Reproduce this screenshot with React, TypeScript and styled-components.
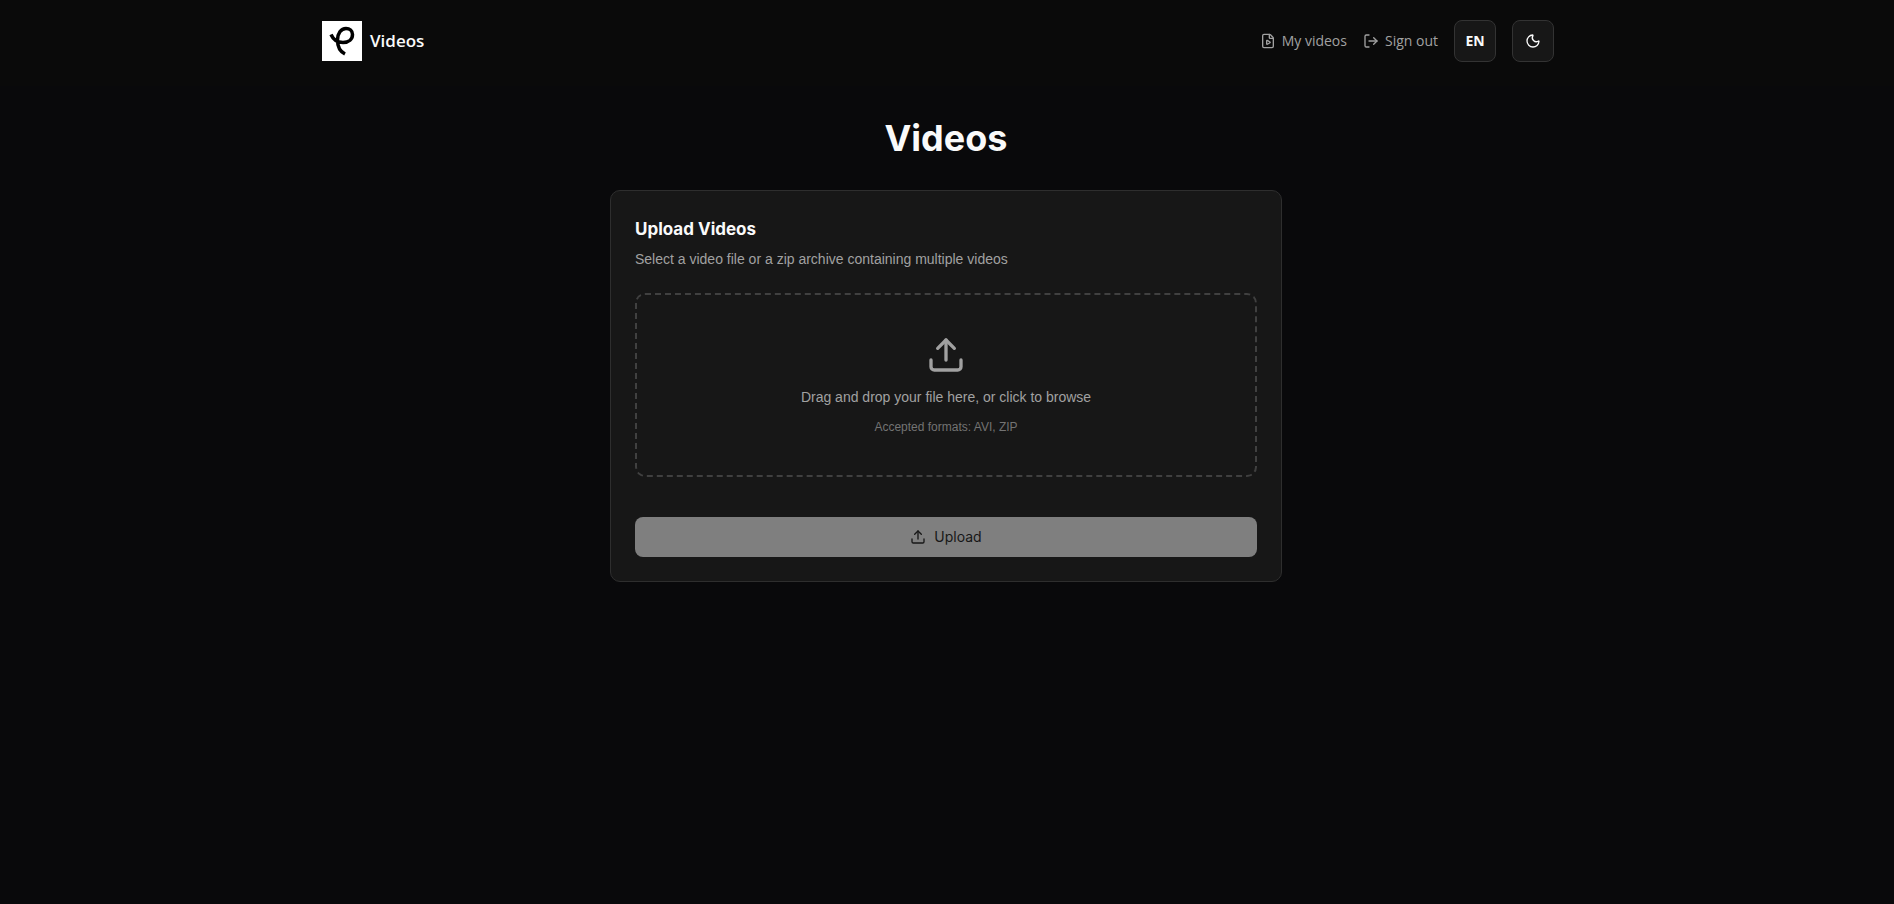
import React from "react";
import styled, { createGlobalStyle } from "styled-components";
import { FilePlay, LogOut, Moon, Upload } from "lucide-react";

const bodyFont = `"Liberation Sans", Arial, sans-serif`;
const headingFont = `Inter, "Liberation Sans", sans-serif`;
const headerFont = `"Open Sans", "Noto Sans", sans-serif`;

const GlobalStyle = createGlobalStyle`
  *, *::before, *::after { box-sizing: border-box; }
  body {
    margin: 0;
    background: #09090b;
    color: #fafafa;
    font-family: ${bodyFont};
  }
  h1, h2, p { margin: 0; }
`;

const Page = styled.div`
  min-height: 100vh;
  padding-right: 2px;
  background: linear-gradient(#0a0a0a 86px, #09090b 86px);
`;

const Header = styled.header`
  display: flex;
  align-items: center;
  justify-content: space-between;
  max-width: 1280px;
  margin: 0 auto;
  padding: 20px 32px 24px 16px;
  font-family: ${headerFont};
`;

const Brand = styled.a`
  display: flex;
  align-items: center;
  gap: 8px;
  color: #fafafa;
  font-size: 17px;
  line-height: 28px;
  font-weight: 600;
  text-decoration: none;
`;

const Nav = styled.nav`
  display: flex;
  align-items: center;
  gap: 16px;
`;

const NavLink = styled.a`
  display: flex;
  align-items: center;
  gap: 6px;
  color: #a1a1a1;
  font-size: 14px;
  line-height: 20px;
  text-decoration: none;
`;

const SquareButton = styled.button`
  display: flex;
  align-items: center;
  justify-content: center;
  width: 42px;
  height: 42px;
  padding: 0;
  border: 1px solid #333333;
  border-radius: 8px;
  background: #171717;
  color: #fafafa;
  font: 700 14px/20px ${headerFont};
`;

const Main = styled.main`
  max-width: 704px;
  margin: 0 auto;
  padding: 32px 16px;
`;

const Title = styled.h1`
  margin-bottom: 32px;
  font-family: ${headingFont};
  font-size: 36px;
  line-height: 40px;
  font-weight: 700;
  text-align: center;
`;

const Card = styled.section`
  padding: 24px;
  border: 1px solid #2e2e2e;
  border-radius: 10px;
  background: #171717;
`;

const CardTitle = styled.h2`
  font-family: ${headingFont};
  font-size: 17px;
  line-height: 28px;
  font-weight: 700;
`;

const Description = styled.p`
  margin: 6px 0 24px;
  color: #a1a1a1;
  font-size: 14px;
  line-height: 20px;
`;

const DropZone = styled.label`
  display: flex;
  flex-direction: column;
  align-items: center;
  padding: 40px 32px;
  border: 2px dashed #404040;
  border-radius: 10px;
  color: #a1a1a1;
  font-size: 14px;
  line-height: 20px;
  cursor: pointer;
`;

const FileInput = styled.input`
  position: absolute;
  width: 1px;
  height: 1px;
  opacity: 0;
`;

const Prompt = styled.span`
  margin-top: 12px;
`;

const Formats = styled.span`
  margin-top: 12px;
  color: #737373;
  font-size: 12px;
  line-height: 16px;
`;

const UploadButton = styled.button`
  display: flex;
  align-items: center;
  justify-content: center;
  gap: 8px;
  width: 100%;
  height: 40px;
  margin-top: 40px;
  border: 0;
  border-radius: 8px;
  background: #7f7f7f;
  color: #171717;
  font: 400 14px/20px ${headingFont};
`;

const Logo = () => (
  <svg width="40" height="40" viewBox="0 0 40 40" aria-hidden="true">
    <rect width="40" height="40" fill="#ffffff" />
    <path
      d="M9 13.500C11 18 15 21.500 21 21.500C27 21.500 30.500 18 30.500 13.500C30.500 9.700 27.600 7.500 24 7.500C19 7.500 15.500 12.500 15.500 19C15.500 26 18 30.500 23 33"
      fill="none"
      stroke="#000000"
      strokeWidth="3.5"
    />
  </svg>
);

export default function App() {
  return (
    <>
      <GlobalStyle />
      <Page>
        <Header>
          <Brand href="#">
            <Logo />
            Videos
          </Brand>
          <Nav>
            <NavLink href="#">
              <FilePlay size={16} />
              My videos
            </NavLink>
            <NavLink href="#">
              <LogOut size={16} />
              Sign out
            </NavLink>
            <SquareButton type="button">EN</SquareButton>
            <SquareButton type="button" aria-label="Toggle theme">
              <Moon size={16} />
            </SquareButton>
          </Nav>
        </Header>
        <Main>
          <Title>Videos</Title>
          <Card>
            <CardTitle>Upload Videos</CardTitle>
            <Description>Select a video file or a zip archive containing multiple videos</Description>
            <DropZone>
              <FileInput type="file" accept=".avi,.zip" />
              <Upload size={40} />
              <Prompt>Drag and drop your file here, or click to browse</Prompt>
              <Formats>Accepted formats: AVI, ZIP</Formats>
            </DropZone>
            <UploadButton type="button" disabled>
              <Upload size={16} />
              Upload
            </UploadButton>
          </Card>
        </Main>
      </Page>
    </>
  );
}
